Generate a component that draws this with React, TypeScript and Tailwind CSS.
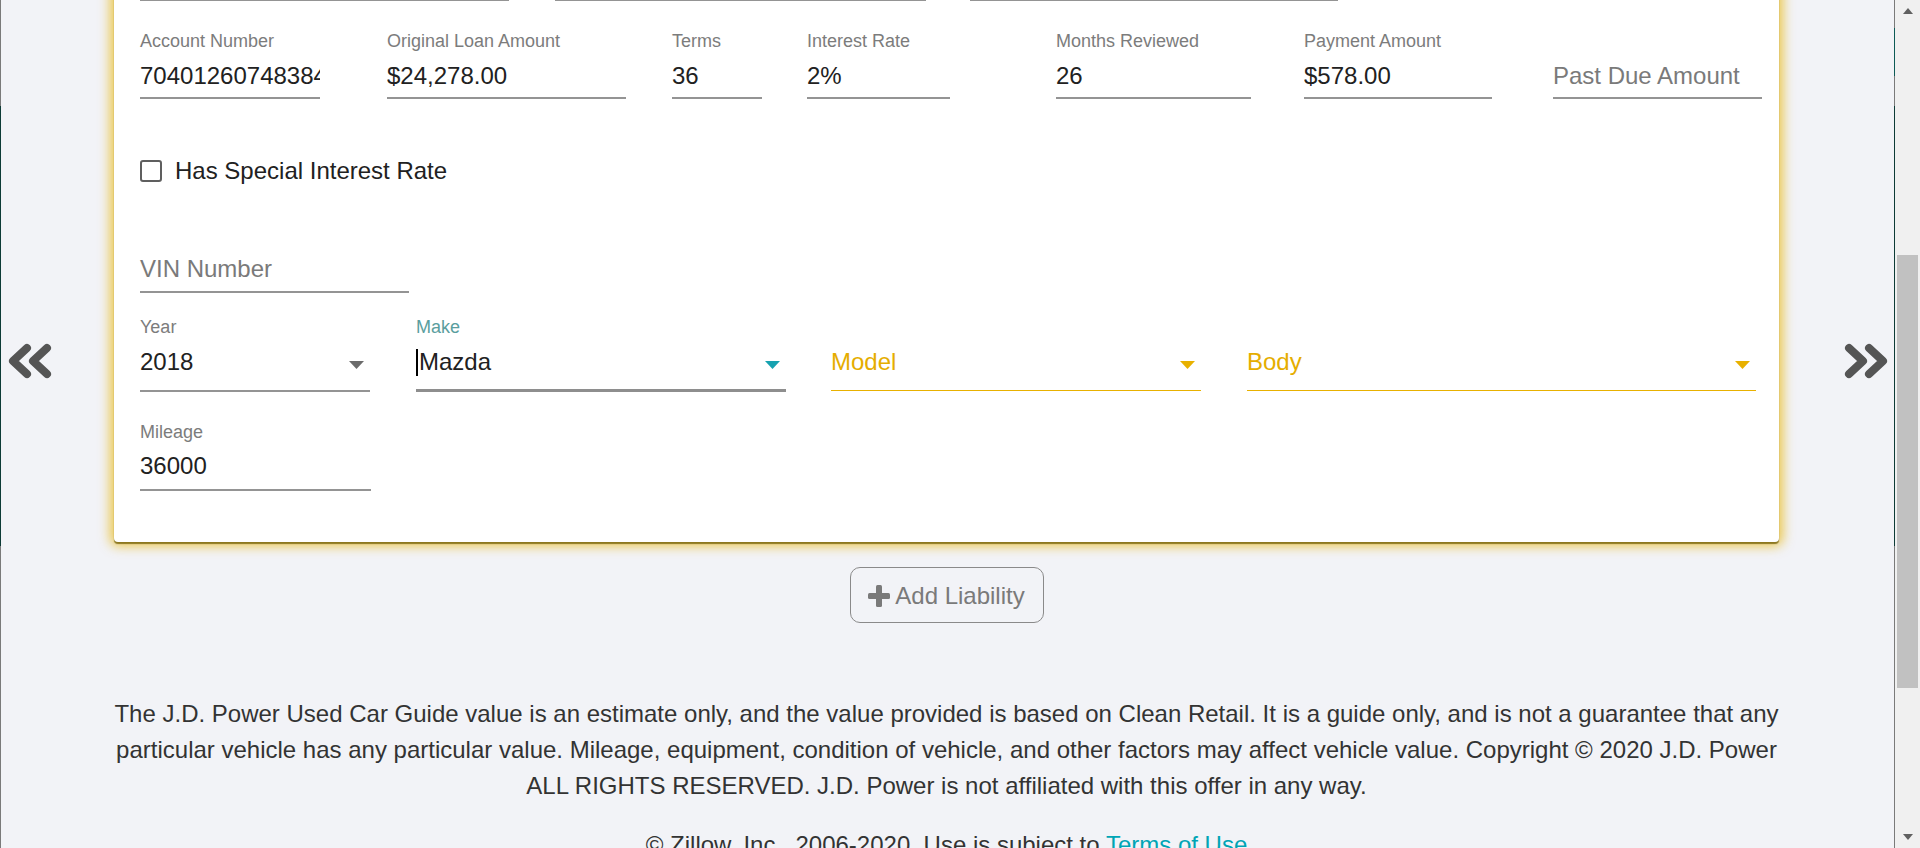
import React from 'react';

const FONT = "font-['Liberation_Sans',Arial,Helvetica,sans-serif]";

function DoubleChevron({ dir }: { dir: 'left' | 'right' }) {
  const pts =
    dir === 'left'
      ? ['21,5 7,18 21,31', '41,5 27,18 41,31']
      : ['7,5 21,18 7,31', '27,5 41,18 27,31'];
  return (
    <svg width="48" height="36" viewBox="0 0 48 36" fill="none">
      {pts.map((p) => (
        <polyline key={p} points={p} stroke="#555555" strokeWidth="8" strokeLinecap="round" strokeLinejoin="round" />
      ))}
    </svg>
  );
}

function Caret({ color }: { color: string }) {
  return (
    <svg width="15" height="8" viewBox="0 0 15 8" className="mr-[6px] mt-[5px] shrink-0">
      <polygon points="0,0 15,0 7.5,8" fill={color} />
    </svg>
  );
}

function TextField({ label, value, placeholder, width, ml = '' }: { label: string; value?: string; placeholder?: boolean; width: string; ml?: string }) {
  return (
    <div className={`flex flex-col ${width} ${ml}`}>
      <div className={`h-[22px] text-[18px] leading-[22px] ${placeholder ? 'text-transparent' : 'text-[#7c7c7c]'} whitespace-nowrap`}>
        {placeholder ? '' : label}
      </div>
      <div className="mt-[10px] overflow-hidden whitespace-nowrap border-b-2 border-[#949494] pb-[7px] text-[24px] leading-[28px]">
        {placeholder ? <span className="text-[#7a7a7a]">{label}</span> : <span className="text-[#212121]">{value}</span>}
      </div>
    </div>
  );
}

export default function App() {
  return (
    <div className={`flex h-[848px] w-[1920px] overflow-hidden bg-[#f2f3f7] ${FONT}`}>
      {/* left window edge */}
      <div className="flex w-px flex-col">
        <div className="h-[106px] bg-[#7a7a7a]" />
        <div className="h-[440px] bg-[#0d3b36]" />
        <div className="flex-1 bg-[#7a7a7a]" />
      </div>

      <div className="w-[113px] pl-[5px] pt-[343px]">
        <DoubleChevron dir="left" />
      </div>

      <div className="flex w-[1665px] flex-col">
        {/* card */}
        <div className="-mt-[39px] flex flex-col rounded-[4px] bg-white pb-[51px] pl-[26px] shadow-[0_2px_1px_rgba(110,90,0,0.75),0_0_12px_4px_rgba(232,180,0,0.7)]">
          <div className="flex h-[40px] items-end">
            <div className="w-[369px] border-b-2 border-[#949494]" />
            <div className="ml-[46px] w-[371px] border-b-2 border-[#949494]" />
            <div className="ml-[44px] w-[368px] border-b-2 border-[#949494]" />
          </div>

          <div className="mt-[29px] flex">
            <TextField label="Account Number" value="70401260748384" width="w-[180px]" />
            <TextField label="Original Loan Amount" value="$24,278.00" width="w-[239px]" ml="ml-[67px]" />
            <TextField label="Terms" value="36" width="w-[90px]" ml="ml-[46px]" />
            <TextField label="Interest Rate" value="2%" width="w-[143px]" ml="ml-[45px]" />
            <TextField label="Months Reviewed" value="26" width="w-[195px]" ml="ml-[106px]" />
            <TextField label="Payment Amount" value="$578.00" width="w-[188px]" ml="ml-[53px]" />
            <TextField label="Past Due Amount" placeholder width="w-[209px]" ml="ml-[61px]" />
          </div>

          <label className="mt-[58px] flex h-[28px] items-center">
            <span className="h-[22px] w-[22px] rounded-[3px] border-[2.5px] border-[#5f5f5f]" />
            <span className="ml-[13px] text-[24px] leading-[28px] text-[#212121]">Has Special Interest Rate</span>
          </label>

          <div className="mt-[70px] w-[269px] border-b-2 border-[#949494] pb-[8px] text-[24px] leading-[28px] text-[#7a7a7a]">
            VIN Number
          </div>

          <div className="mt-[23px] flex">
            <div className="flex w-[230px] flex-col">
              <div className="h-[22px] text-[18px] leading-[22px] text-[#7c7c7c]">Year</div>
              <div className="mt-[10px] flex items-center justify-between border-b-2 border-[#949494] pb-[14px]">
                <span className="text-[24px] leading-[28px] text-[#212121]">2018</span>
                <Caret color="#6b6b6b" />
              </div>
            </div>
            <div className="ml-[46px] flex w-[370px] flex-col">
              <div className="h-[22px] text-[18px] leading-[22px] text-[#5a9e9e]">Make</div>
              <div className="mt-[10px] flex items-center justify-between border-b-[3px] border-[#8e8e8e] pb-[13px]">
                <span className="flex items-center text-[24px] leading-[28px] text-[#212121]">
                  <span className="mr-px h-[27px] w-[2px] bg-black" />
                  Mazda
                </span>
                <Caret color="#17a2b0" />
              </div>
            </div>
            <div className="ml-[45px] flex w-[370px] flex-col">
              <div className="h-[22px]" />
              <div className="mt-[10px] flex items-center justify-between border-b-[1.5px] border-[#e8b100] pb-[14px]">
                <span className="text-[24px] leading-[28px] text-[#e5ad00]">Model</span>
                <Caret color="#e8b100" />
              </div>
            </div>
            <div className="ml-[46px] flex w-[509px] flex-col">
              <div className="h-[22px]" />
              <div className="mt-[10px] flex items-center justify-between border-b-[1.5px] border-[#e8b100] pb-[14px]">
                <span className="text-[24px] leading-[28px] text-[#e5ad00]">Body</span>
                <Caret color="#e8b100" />
              </div>
            </div>
          </div>

          <div className="mt-[29px] flex w-[231px] flex-col">
            <div className="h-[22px] text-[18px] leading-[22px] text-[#7c7c7c]">Mileage</div>
            <div className="mt-[9px] border-b-2 border-[#949494] pb-[9px] text-[24px] leading-[28px] text-[#212121]">36000</div>
          </div>
        </div>

        <div className="mt-[25px] flex justify-center">
          <button className="flex h-[56px] w-[194px] items-center justify-center rounded-[10px] border-[1.5px] border-[#8a8a8a] pt-px text-[24px] text-[#7a7a7a]">
            <svg width="22" height="22" viewBox="0 0 22 22" className="mr-[5px]">
              <rect x="8" y="0" width="6" height="22" rx="1.5" fill="#7a7a7a" />
              <rect x="0" y="8" width="22" height="6" rx="1.5" fill="#7a7a7a" />
            </svg>
            Add Liability
          </button>
        </div>

        <p className="mt-[73px] text-center text-[24px] leading-[36px] text-[#333333]">
          The J.D. Power Used Car Guide value is an estimate only, and the value provided is based on Clean Retail. It is a guide only, and is not a guarantee that any particular vehicle has any particular value. Mileage, equipment, condition of vehicle, and other factors may affect vehicle value. Copyright © 2020 J.D. Power ALL RIGHTS RESERVED. J.D. Power is not affiliated with this offer in any way.
        </p>

        <p className="mt-[23px] text-center text-[24px] leading-[36px] text-[#333333]">
          © Zillow, Inc., 2006-2020. Use is subject to <a className="text-[#00a5b5]">Terms of Use</a>
        </p>
      </div>

      <div className="w-[115px] pl-[63px] pt-[343px]">
        <DoubleChevron dir="right" />
      </div>

      {/* right window edge */}
      <div className="flex w-px flex-col">
        <div className="h-[28px] bg-[#7a7a7a]" />
        <div className="h-[48px] bg-[#0d5b56]" />
        <div className="h-[30px] bg-[#7a7a7a]" />
        <div className="h-[440px] bg-[#0d3b36]" />
        <div className="flex-1 bg-[#7a7a7a]" />
      </div>

      {/* scrollbar */}
      <div className="flex w-[25px] flex-col items-center bg-[#f0f0f0]">
        <svg width="10" height="6" viewBox="0 0 10 6" className="mt-[8px]">
          <polygon points="0,6 10,6 5,0" fill="#606060" />
        </svg>
        <div className="mt-[241px] h-[433px] w-[21px] bg-[#c1c1c1]" />
        <div className="flex-1" />
        <svg width="10" height="6" viewBox="0 0 10 6" className="mb-[8px]">
          <polygon points="0,0 10,0 5,6" fill="#606060" />
        </svg>
      </div>
    </div>
  );
}
